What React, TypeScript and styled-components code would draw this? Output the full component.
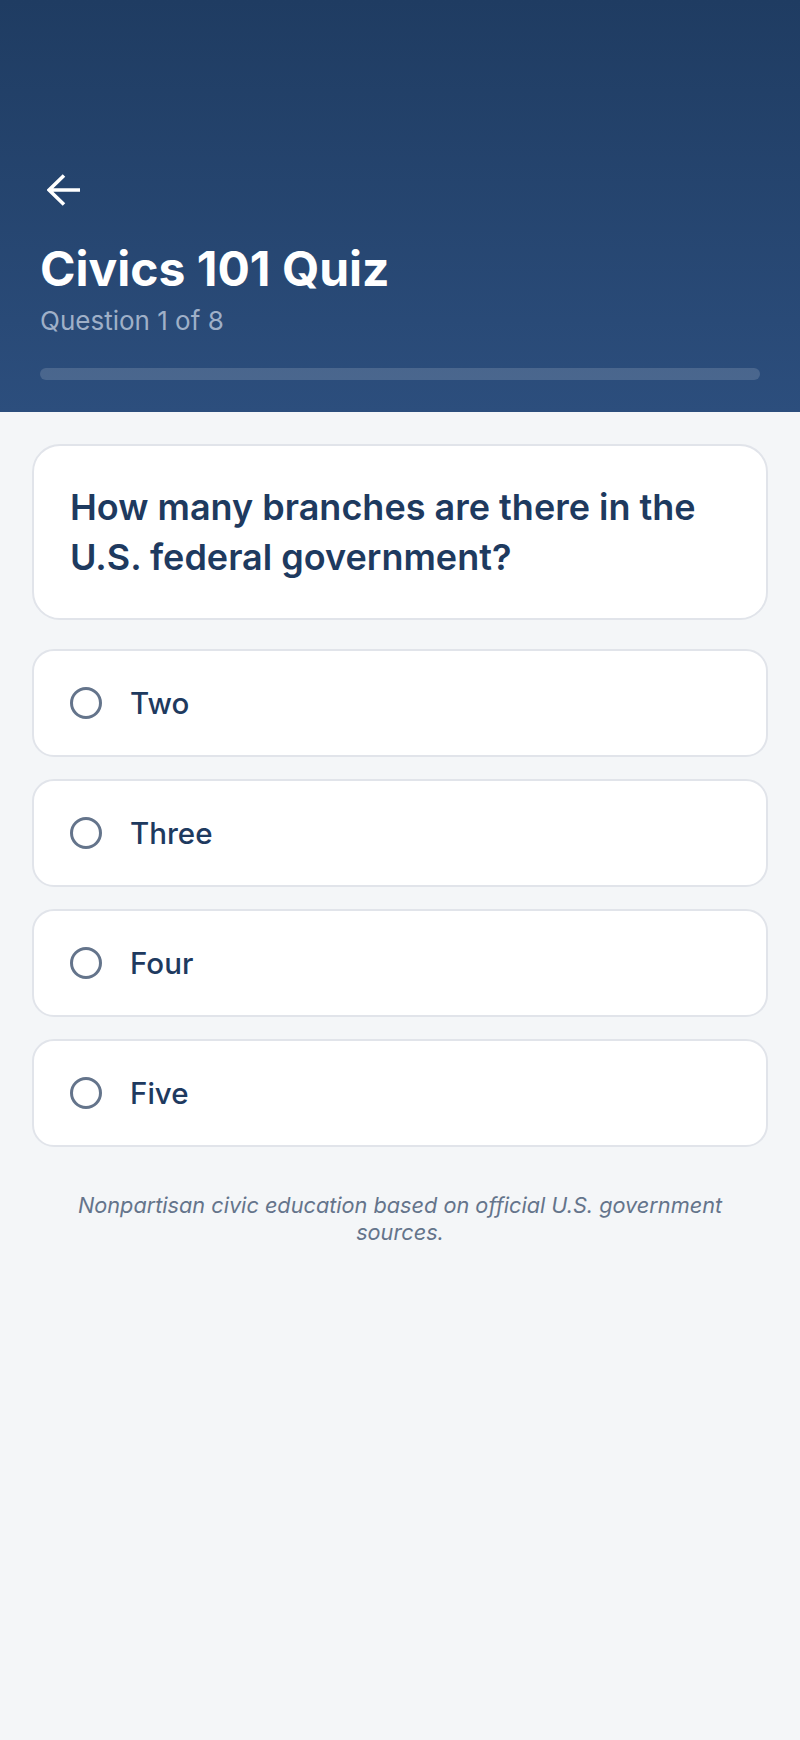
import styled, { createGlobalStyle } from "styled-components";

const GlobalStyle = createGlobalStyle`
  html, body {
    margin: 0;
    padding: 0;
    background: #f4f6f8;
  }
  body {
    font-family: Inter, "Noto Sans", sans-serif;
    -webkit-font-smoothing: antialiased;
  }
  * {
    box-sizing: border-box;
  }
`;

const Page = styled.div`
  min-height: 1740px;
  background: #f4f6f8;
  display: flex;
  flex-direction: column;
`;

const Header = styled.header`
  background: linear-gradient(180deg, #1f3c62 0%, #2c4e7d 100%);
  padding: 170px 40px 32px;
  display: flex;
  flex-direction: column;
`;

const BackButton = styled.button`
  width: 48px;
  height: 40px;
  padding: 0 0 0 7px;
  margin: 0 0 30px 0;
  border: none;
  background: transparent;
  display: flex;
  align-items: center;
  justify-content: flex-start;
  cursor: pointer;
  color: #ffffff;
`;

const Title = styled.h1`
  margin: 0;
  font-size: 48px;
  line-height: 1.2;
  font-weight: 700;
  color: #ffffff;
`;

const Subtitle = styled.p`
  margin: 5px 0 0 0;
  font-size: 26px;
  line-height: 1.35;
  color: #9fb0c8;
`;

const ProgressTrack = styled.div`
  margin-top: 30px;
  height: 12px;
  border-radius: 6px;
  background: rgba(255, 255, 255, 0.15);
  overflow: hidden;
`;

const ProgressFill = styled.div`
  height: 100%;
  background: #ffffff;
  border-radius: 6px;
`;

const Content = styled.main`
  padding: 32px 32px 40px;
  display: flex;
  flex-direction: column;
`;

const QuestionCard = styled.div`
  background: #ffffff;
  border: 2px solid #e1e4ea;
  border-radius: 28px;
  padding: 36px;
  margin-bottom: 29px;
`;

const QuestionText = styled.h2`
  margin: 0;
  font-size: 36px;
  line-height: 50px;
  font-weight: 600;
  color: #1e3a5f;
`;

const OptionList = styled.div`
  display: flex;
  flex-direction: column;
  gap: 22px;
`;

const Option = styled.button`
  display: flex;
  align-items: center;
  gap: 28px;
  width: 100%;
  padding: 36px;
  background: #ffffff;
  border: 2px solid #e1e4ea;
  border-radius: 22px;
  text-align: left;
  font-family: inherit;
  cursor: pointer;
`;

const Radio = styled.span<{ $checked?: boolean }>`
  width: 32px;
  height: 32px;
  flex-shrink: 0;
  border-radius: 50%;
  border: 3.5px solid ${(p) => (p.$checked ? "#1e3a5f" : "#64748b")};
`;

const OptionLabel = styled.span`
  font-size: 29.5px;
  line-height: 32px;
  font-weight: 500;
  color: #1e3a5f;
`;

const Disclaimer = styled.p`
  margin: 45px 0 0 0;
  padding: 0 32px;
  text-align: center;
  font-size: 21.7px;
  line-height: 27px;
  font-style: italic;
  color: #64748b;
`;

const options = ["Two", "Three", "Four", "Five"];

export default function App() {
  const current = 1;
  const total = 8;
  const progress = ((current - 1) / total) * 100;

  return (
    <>
      <GlobalStyle />
      <Page>
        <Header>
          <BackButton aria-label="Back">
            <svg width="34" height="32" viewBox="0 0 34 32" fill="none">
              <path
                d="M33 16H2M17 1.5L2 16l15 14.5"
                stroke="#ffffff"
                strokeWidth="3.6"
                strokeLinecap="butt"
                strokeLinejoin="miter"
              />
            </svg>
          </BackButton>
          <Title>Civics 101 Quiz</Title>
          <Subtitle>
            Question {current} of {total}
          </Subtitle>
          <ProgressTrack>
            <ProgressFill style={{ width: `${progress}%` }} />
          </ProgressTrack>
        </Header>
        <Content>
          <QuestionCard>
            <QuestionText>
              How many branches are there in the U.S. federal government?
            </QuestionText>
          </QuestionCard>
          <OptionList>
            {options.map((o) => (
              <Option key={o}>
                <Radio />
                <OptionLabel>{o}</OptionLabel>
              </Option>
            ))}
          </OptionList>
          <Disclaimer>
            Nonpartisan civic education based on official U.S. government
            sources.
          </Disclaimer>
        </Content>
      </Page>
    </>
  );
}
